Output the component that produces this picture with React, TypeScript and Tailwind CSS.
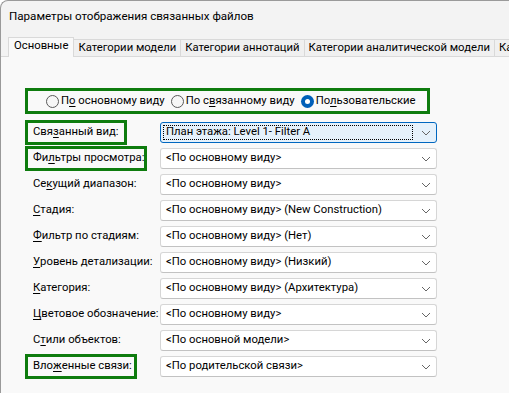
import React from "react";

const GREEN = "border-[3px] border-[#0e7c0e]";

function U({ children }: { children: React.ReactNode }) {
  return <span className="underline underline-offset-[2px] decoration-[1px]">{children}</span>;
}

function Chevron() {
  return (
    <svg width="10" height="6" viewBox="0 0 10 6" className="shrink-0">
      <path d="M1 1 L5 5 L9 1" fill="none" stroke="#666666" strokeWidth="1" />
    </svg>
  );
}

function Combo({ text, focused }: { text: string; focused?: boolean }) {
  if (focused) {
    return (
      <div className="mt-[2px] w-[277px] h-[21px] flex items-center rounded-[3px] border border-[#0067c0] bg-[#e5f1fb] pl-[2px] pr-[5px]">
        <div className="flex-1 h-[15px] flex items-center border border-dotted border-black pl-[2px] mr-[8px] text-black whitespace-nowrap">
          {text}
        </div>
        <Chevron />
      </div>
    );
  }
  return (
    <div className="mt-[2px] w-[277px] h-[21px] flex items-center rounded-[3px] border border-[#d6d6d6] border-b-[#c2c2c2] bg-white pl-[5px] pr-[5px]">
      <div className="flex-1 text-black whitespace-nowrap">{text}</div>
      <Chevron />
    </div>
  );
}

function Radio({ checked, children }: { checked?: boolean; children: React.ReactNode }) {
  return (
    <div className="flex items-center gap-[2px] whitespace-nowrap">
      {checked ? (
        <div className="w-[13px] h-[13px] rounded-full bg-[#005fb8] flex items-center justify-center shrink-0">
          <div className="w-[5px] h-[5px] rounded-full bg-white" />
        </div>
      ) : (
        <div className="w-[13px] h-[13px] rounded-full border border-[#5a5a5a] bg-[#f6f6f6] shrink-0" />
      )}
      <span>{children}</span>
    </div>
  );
}

type Row = { label: React.ReactNode; value: string; box?: string; focused?: boolean };

export default function App() {
  const rows: Row[] = [
    { label: <>Свя<U>з</U>анный вид:</>, value: "План этажа: Level 1- Filter A", box: "w-[102px]", focused: true },
    { label: <>Фи<U>л</U>ьтры просмотра:</>, value: "<По основному виду>", box: "w-[122px]" },
    { label: <>Се<U>к</U>ущий диапазон:</>, value: "<По основному виду>" },
    { label: <><U>С</U>тадия:</>, value: "<По основному виду> (New Construction)" },
    { label: <><U>Ф</U>ильтр по стадиям:</>, value: "<По основному виду> (Нет)" },
    { label: <><U>У</U>ровень детализации:</>, value: "<По основному виду> (Низкий)" },
    { label: <><U>К</U>атегория:</>, value: "<По основному виду> (Архитектура)" },
    { label: <><U>Ц</U>ветовое обозначение:</>, value: "<По основному виду>" },
    { label: <>С<U>т</U>или объектов:</>, value: "<По основной модели>" },
    { label: <>Вло<U>ж</U>енные связи:</>, value: "<По родительской связи>", box: "w-[112px]" },
  ];

  const tabs = ["Категории модели", "Категории аннотаций", "Категории аналитической модели", "Категории"];

  return (
    <div
      className="w-[509px] h-[393px] overflow-hidden bg-[#f3f3f3] border-l border-t border-[#9a9a9a] rounded-tl-[8px] flex flex-col text-[11.3px] text-[#1a1a1a]"
      style={{ fontFamily: 'Roboto, "Noto Sans", sans-serif' }}
    >
      <div className="h-[29px] flex items-center pl-[8px] pt-[2px] text-black whitespace-nowrap text-[11.6px]">
        Параметры отображения связанных файлов
      </div>
      <div className="h-[27px] flex items-end pl-[7px] border-b border-[#d9d9d9] whitespace-nowrap">
        <div className="h-[20px] px-[5px] flex items-center bg-[#f9f9f9] border border-b-0 border-[#d9d9d9] -mb-px pb-[2px] text-black shrink-0">
          Основные
        </div>
        {tabs.map((t) => (
          <div key={t} className="h-[17px] px-[4px] flex items-center bg-[#f0f0f0] border border-l-0 border-b-0 border-[#d9d9d9] text-black shrink-0">
            {t}
          </div>
        ))}
      </div>
      <div className="flex-1 bg-[#f9f9f9] pl-[24px] pt-[31px]">
        <div className={`w-[405px] h-[26px] ${GREEN} flex items-center pl-[18px] gap-[6px] text-black`}>
          <Radio>П<U>о</U> основному виду</Radio>
          <Radio>По с<U>в</U>язанному виду</Radio>
          <Radio checked>По<U>л</U>ьзовательские</Radio>
        </div>
        <div className="mt-[6px] flex flex-col">
          {rows.map((r, i) => (
            <div key={i} className="h-[26px] flex items-start">
              <div className="w-[135px] shrink-0">
                {r.box ? (
                  <div className={`${r.box} h-[25px] ${GREEN} flex items-center pl-[5px] whitespace-nowrap text-black`}>
                    {r.label}
                  </div>
                ) : (
                  <div className="h-[25px] flex items-center pl-[8px] whitespace-nowrap text-black">{r.label}</div>
                )}
              </div>
              <Combo text={r.value} focused={r.focused} />
            </div>
          ))}
        </div>
      </div>
    </div>
  );
}
